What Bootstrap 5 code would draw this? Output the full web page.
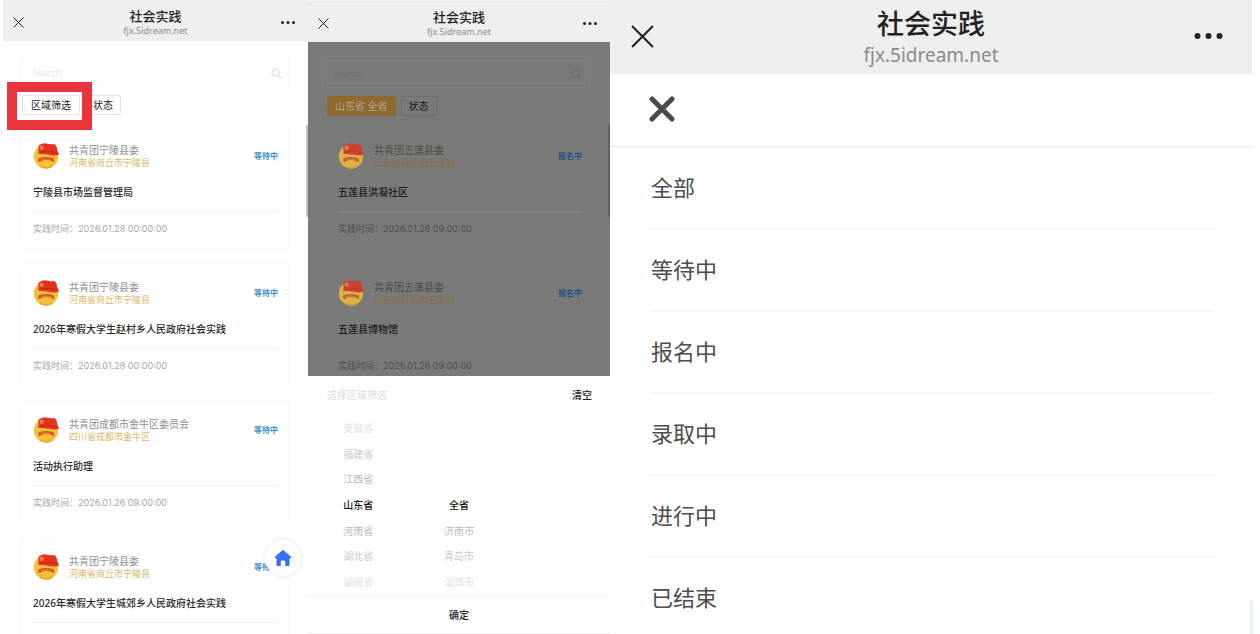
<!DOCTYPE html>
<html lang="zh-CN">
<head>
<meta charset="utf-8">
<meta name="viewport" content="width=device-width, initial-scale=1">
<title>社会实践</title>
<link href="https://cdn.jsdelivr.net/npm/bootstrap@5.3.0/dist/css/bootstrap.min.css" rel="stylesheet">
<style>
body { font-family: "Noto Sans", "Noto Sans CJK SC", sans-serif; background: #fff; line-height: 1.2; }
.board { padding: 0 8px 0 3px; }
.pane { min-width: 0; --page: #fff; --edge: #f8f8f8; --hint: #e6e6e6; --rule: #f0f0f0; --name: #8f8f8f; --area: #dcb866; --state: #3d8fc4; --head: #2a2a2a; --time: #a6a6a6; background: var(--page); }
.pane-list { flex: 305 1 0; }
.pane-area { flex: 302 1 0; --page: #7a7b78; --edge: #80817e; --hint: #6f706d; --rule: #868784; --name: #4b4c4a; --area: #8d6b43; --state: #23528a; --head: #1c1c1c; --time: #4c4d4b; }
.pane-state { flex: 642 1 0; }

.topbar { display: grid; grid-template-columns: 1fr auto 1fr; align-items: center; background: #eee; color: #222; height: 41px; flex: none; }
.topbar button, .plain { border: 0; background: none; padding: 0; line-height: 0; color: inherit; }
.topbar .shut { justify-self: start; margin-left: 10px; padding-top: 3px; }
.topbar .more { justify-self: end; margin-right: 13px; padding-top: 3px; }
.topbar h1 { font-size: 13px; line-height: 18px; font-weight: 500; margin: 3px 0 0; }
.topbar p { font-size: 9px; line-height: 12px; margin: 0; color: #8b8b8b; }
.pane-area .topbar { height: 42px; border-top: 1px solid #f6f6f6; }
.pane-state .topbar { height: 74px; }
.pane-state .topbar h1 { font-size: 27px; line-height: 34px; margin-top: 1px; }
.pane-state .topbar p { font-size: 19px; line-height: 28px; }
.pane-state .shut { margin-left: 21px; padding: 0 0 2px; }
.pane-state .more { margin-right: 29px; padding: 0 0 2px; }

.feed { padding: 18px 18px 0; }
.pane-area .feed { padding: 18px 20px 0 14px; }
.finder { height: 28px; border: 1px solid var(--edge); border-radius: 3px; padding: 0 7px 0 11px; color: #d9d9d9; }
.pane-area .finder { color: #6a6b68; }
.finder input { border: 0; background: none; outline: 0; font-size: 9px; padding: 0; min-width: 0; }
.finder input::placeholder { color: var(--hint); opacity: 1; }
.chips { margin: 8px 0 11px; gap: 5px; padding-left: 1px; }
.pane-area .chips { padding-left: 5px; }
.chip { height: 20px; border: 1px solid #e6e6e6; border-radius: 2px; background: #fff; color: #222; font-size: 10px; line-height: 18px; padding: 0 7px; }
.chip-first { padding: 0 8px; }
.pane-area .chip { background: none; border-color: #6f706d; color: #161616; }
.pane-area .chip-on { background: #8f6a2e; border-color: #8f6a2e; color: #b0a793; }
.ring { position: absolute; inset: -13px -12px -15px -15px; border: 10px solid #e8343a; z-index: 2; pointer-events: none; }

.notice { height: 123px; border: 1px solid var(--edge); border-radius: 4px; margin-bottom: 14px; padding: 15px 11px 0; }
.pane-area .notice { border-color: transparent; padding: 14px 7px 0 15px; }
.notice .who { gap: 9px; height: 27px; }
.notice .org { font-size: 10px; line-height: 13px; color: var(--name); padding-top: 1px; }
.notice .area { font-size: 9px; line-height: 12px; color: var(--area); }
.notice .flagged { font-size: 8px; font-weight: 700; color: var(--state); }
.notice h2 { font-size: 10px; line-height: 16px; font-weight: 500; color: var(--head); margin: 15px 0 11px; }
.notice time { display: block; border-top: 1px solid var(--rule); padding: 10px 0 0; font: 9px/14px Inter, "Noto Sans CJK SC", sans-serif; color: var(--time); }
.notice .bare { border-color: transparent; }
.thumb-bar { position: absolute; right: 0; top: 125px; width: 2px; height: 92px; background: #c4c4c4; }
.pane-area .thumb-bar { background: #62635f; }
.home { position: absolute; right: 7px; bottom: 58px; width: 36px; height: 36px; border-radius: 50%; background: #fff; box-shadow: 0 0 5px rgba(0,0,0,.12); color: #3a6cf4; z-index: 3; }

.sheet { position: absolute; left: 0; right: 0; bottom: 0; height: 258px; background: #fff; font-size: 10px; }
.sheet-head { height: 39px; margin: 0 18px 0 19px; border-bottom: 1px solid #f7f7f7; color: #dcdcdc; }
.sheet-head button { font-size: 10px; font-weight: 500; color: #222; line-height: 16px; }
.wheel { display: grid; grid-template-columns: repeat(3, 1fr); grid-template-rows: repeat(7, 1fr); grid-auto-flow: column; flex: 1; }
.wheel button { font-size: 10px; color: #b8b8b8; }
.wheel .dim { color: #cacaca; }
.wheel .faint { color: #e2e2e2; }
.wheel .picked { color: #111; font-weight: 500; }
.wheel .city-first { grid-column: 2; grid-row: 4; }
.wheel .city-second { grid-column: 2; grid-row: 5; }
.wheel .city-third { grid-column: 2; grid-row: 6; }
.wheel .city-fourth { grid-column: 2; grid-row: 7; }
.plain.confirm { height: 39px; border-top: 1px solid #f2f2f2; border-bottom: 1px solid #f2f2f2; font-size: 10px; font-weight: 500; color: #222; }

.closer { height: 74px; border-bottom: 3px solid #f4f4f4; padding: 0 0 2px 39px; color: #4a4a4a; flex: none; }
.options { padding: 0 39px 0 41px; }
.options button { display: block; width: 100%; height: 82px; text-align: left; font-size: 22px; color: #4c4c4c; padding-bottom: 2px; border-bottom: 2px solid #f5f5f5; }
.edge-mark { position: absolute; right: -1px; bottom: 0; width: 3px; height: 33px; background: #e6f1f9; }
</style>
</head>
<body>
<svg width="0" height="0" class="position-absolute" aria-hidden="true">
  <symbol id="cross" viewBox="0 0 22 22"><path d="M1 1 21 21M21 1 1 21" stroke="currentColor" stroke-width="2" fill="none"/></symbol>
  <symbol id="dots" viewBox="0 0 28 6"><g fill="currentColor"><circle cx="3" cy="3" r="3"/><circle cx="14" cy="3" r="3"/><circle cx="25" cy="3" r="3"/></g></symbol>
  <symbol id="lens" viewBox="0 0 12 12"><g fill="none" stroke="currentColor" stroke-width="1.2"><circle cx="5" cy="5" r="3.9"/><path d="m8 8 3.2 3"/></g></symbol>
  <symbol id="emblem" viewBox="0 0 28 28">
    <circle cx="13.500" cy="15" r="12.600" fill="#f3c03a"/>
    <path d="M5.500 4Q10 .2 14 1.500t8 .5q3 2 3 6l2 5q-4 1.500-9 .5T5.500 12.200Q6 8 5.500 4z" fill="#e5321f"/>
    <circle cx="9" cy="6" r="2.300" fill="#f47b3c"/>
    <path d="M7 10.500q8-2 18 .5" fill="none" stroke="#c52a1c"/>
    <path d="M5.500 17q8-3 16 0l.5 3.500q-2 .5-3-1-5-1.500-10 0-1 1.500-3.500 1z" fill="#d9542a"/>
    <path d="M9 18.200q5-1 9 0" fill="none" stroke="#f3a83a" stroke-dasharray="1.500 1"/>
    <path d="M7 25q7 4 13 0" fill="none" stroke="#e8a828" stroke-width="1.500"/>
  </symbol>
</svg>
<main class="board d-flex vh-100 overflow-hidden">

  <section class="pane pane-list position-relative overflow-hidden">
    <header class="topbar">
      <button class="shut" aria-label="关闭"><svg width="11" height="11"><use href="#cross"/></svg></button>
      <div class="text-center"><h1>社会实践</h1><p>fjx.5idream.net</p></div>
      <button class="more" aria-label="更多"><svg width="14" height="3"><use href="#dots"/></svg></button>
    </header>
    <div class="feed">
      <label class="finder d-flex align-items-center"><input class="flex-grow-1" type="search" placeholder="Search" aria-label="Search"><svg width="11" height="11"><use href="#lens"/></svg></label>
      <div class="chips d-flex">
        <div class="position-relative d-flex"><button class="chip chip-first">区域筛选</button><span class="ring"></span></div>
        <button class="chip">状态</button>
      </div>
      <article class="notice">
        <div class="who d-flex align-items-center"><svg width="27" height="27"><use href="#emblem"/></svg><div class="flex-grow-1"><div class="org">共青团宁陵县委</div><div class="area">河南省商丘市宁陵县</div></div><span class="flagged">等待中</span></div>
        <h2>宁陵县市场监督管理局</h2><time>实践时间：2026.01.28 00:00:00</time>
      </article>
      <article class="notice">
        <div class="who d-flex align-items-center"><svg width="27" height="27"><use href="#emblem"/></svg><div class="flex-grow-1"><div class="org">共青团宁陵县委</div><div class="area">河南省商丘市宁陵县</div></div><span class="flagged">等待中</span></div>
        <h2>2026年寒假大学生赵村乡人民政府社会实践</h2><time>实践时间：2026.01.28 00:00:00</time>
      </article>
      <article class="notice">
        <div class="who d-flex align-items-center"><svg width="27" height="27"><use href="#emblem"/></svg><div class="flex-grow-1"><div class="org">共青团成都市金牛区委员会</div><div class="area">四川省成都市金牛区</div></div><span class="flagged">等待中</span></div>
        <h2>活动执行助理</h2><time>实践时间：2026.01.26 09:00:00</time>
      </article>
      <article class="notice">
        <div class="who d-flex align-items-center"><svg width="27" height="27"><use href="#emblem"/></svg><div class="flex-grow-1"><div class="org">共青团宁陵县委</div><div class="area">河南省商丘市宁陵县</div></div><span class="flagged">等待中</span></div>
        <h2>2026年寒假大学生城郊乡人民政府社会实践</h2><time>&nbsp;</time>
      </article>
    </div>
    <span class="thumb-bar"></span>
    <a href="#" class="home d-flex align-items-center justify-content-center" aria-label="首页"><svg width="18" height="18" viewBox="0 0 18 18"><path d="M9 .8 17.300 8q.3 1.200-1 1.200H15.500V16q0 1-1 1h-3.300v-4.500q0-1-1-1H7.800q-1 0-1 1V17H3.500q-1 0-1-1V9.200H1.700Q.4 9.200.7 8z" fill="currentColor"/></svg></a>
  </section>

  <section class="pane pane-area position-relative overflow-hidden">
    <header class="topbar">
      <button class="shut" aria-label="关闭"><svg width="11" height="11"><use href="#cross"/></svg></button>
      <div class="text-center"><h1>社会实践</h1><p>fjx.5idream.net</p></div>
      <button class="more" aria-label="更多"><svg width="14" height="3"><use href="#dots"/></svg></button>
    </header>
    <div class="feed">
      <label class="finder d-flex align-items-center"><input class="flex-grow-1" type="search" placeholder="Search" aria-label="Search"><svg width="11" height="11"><use href="#lens"/></svg></label>
      <div class="chips d-flex">
        <button class="chip chip-on">山东省 全省</button>
        <button class="chip">状态</button>
      </div>
      <article class="notice">
        <div class="who d-flex align-items-center"><svg width="27" height="27" opacity=".8"><use href="#emblem"/></svg><div class="flex-grow-1"><div class="org">共青团五莲县委</div><div class="area">山东省日照市五莲县</div></div><span class="flagged">报名中</span></div>
        <h2>五莲县洪凝社区</h2><time>实践时间：2026.01.26 09:00:00</time>
      </article>
      <article class="notice">
        <div class="who d-flex align-items-center"><svg width="27" height="27" opacity=".8"><use href="#emblem"/></svg><div class="flex-grow-1"><div class="org">共青团五莲县委</div><div class="area">山东省日照市五莲县</div></div><span class="flagged">报名中</span></div>
        <h2>五莲县博物馆</h2><time class="bare">实践时间：2026.01.26 09:00:00</time>
      </article>
    </div>
    <span class="thumb-bar"></span>
    <div class="sheet d-flex flex-column">
      <div class="sheet-head d-flex justify-content-between align-items-center"><span>选择区域筛选</span><button class="plain">清空</button></div>
      <div class="wheel">
        <button class="plain faint">安徽省</button>
        <button class="plain dim">福建省</button>
        <button class="plain">江西省</button>
        <button class="plain picked">山东省</button>
        <button class="plain">河南省</button>
        <button class="plain dim">湖北省</button>
        <button class="plain faint">湖南省</button>
        <button class="plain picked city-first">全省</button>
        <button class="plain city-second">济南市</button>
        <button class="plain dim city-third">青岛市</button>
        <button class="plain faint city-fourth">淄博市</button>
      </div>
      <button class="plain confirm">确定</button>
    </div>
  </section>

  <section class="pane pane-state position-relative">
    <header class="topbar">
      <button class="shut" aria-label="关闭"><svg width="23" height="23"><use href="#cross"/></svg></button>
      <div class="text-center"><h1>社会实践</h1><p>fjx.5idream.net</p></div>
      <button class="more" aria-label="更多"><svg width="29" height="6"><use href="#dots"/></svg></button>
    </header>
    <div class="closer d-flex align-items-center"><button class="plain" aria-label="收起"><svg width="26" height="26" viewBox="0 0 26 26"><path d="M3 3 23 23M23 3 3 23" stroke="currentColor" stroke-width="5" stroke-linecap="round"/></svg></button></div>
    <div class="options">
      <button class="plain">全部</button>
      <button class="plain">等待中</button>
      <button class="plain">报名中</button>
      <button class="plain">录取中</button>
      <button class="plain">进行中</button>
      <button class="plain">已结束</button>
    </div>
    <span class="edge-mark"></span>
  </section>
</main>
<script src="https://cdn.jsdelivr.net/npm/bootstrap@5.3.0/dist/js/bootstrap.bundle.min.js"></script>
</body>
</html>
